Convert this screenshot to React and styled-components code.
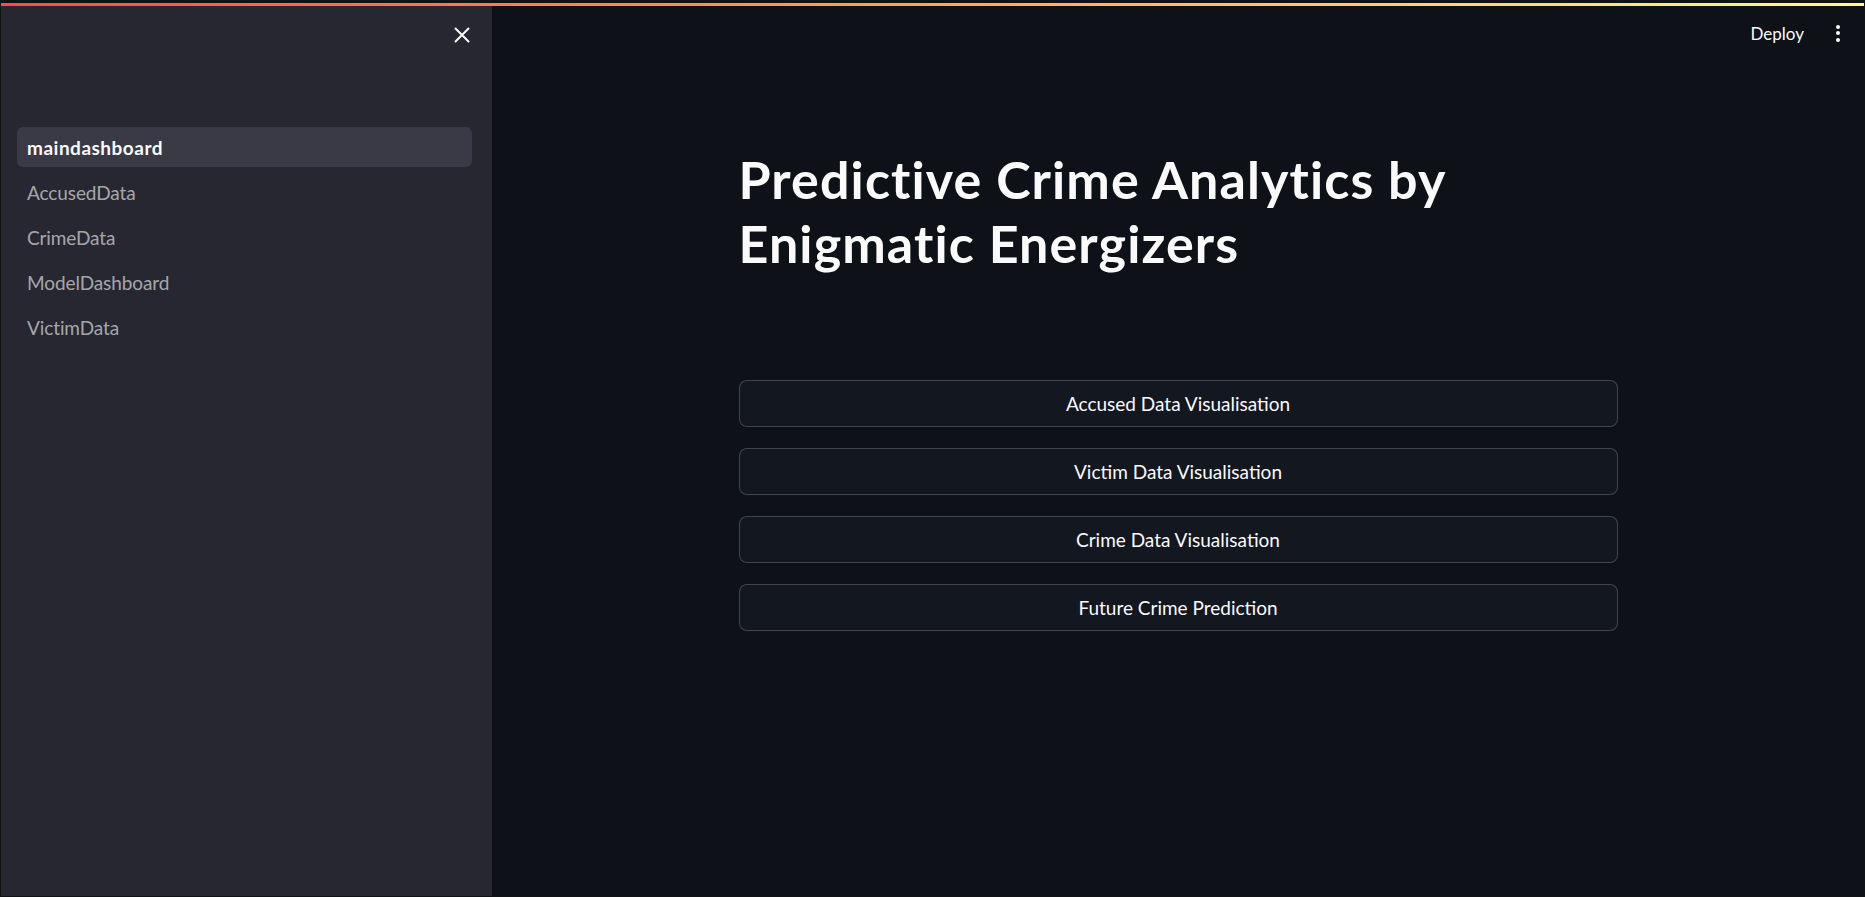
import React from 'react';
import styled, {createGlobalStyle} from 'styled-components';

const GlobalStyle = createGlobalStyle`
  html, body {
    margin: 0;
    padding: 0;
    background: #000;
  }
  body {
    font-family: 'Lato', 'Noto Sans', sans-serif;
    color: #fafafa;
  }
`;

const pages = ['maindashboard', 'AccusedData', 'CrimeData', 'ModelDashboard', 'VictimData'];
const actions = [
  'Accused Data Visualisation',
  'Victim Data Visualisation',
  'Crime Data Visualisation',
  'Future Crime Prediction',
];

const Frame = styled.div`
  width: 1865px;
  height: 897px;
  box-sizing: border-box;
  padding: 3px 1px 1px 1px;
  background: #111214;
  display: flex;
  flex-direction: column;
  overflow: hidden;
`;

const Decoration = styled.div`
  height: 3px;
  flex: none;
  background: linear-gradient(90deg, #ff4b4b, #fffd80);
`;

const Body = styled.div`
  flex: 1;
  display: flex;
  min-height: 0;
`;

const Sidebar = styled.aside`
  width: 491px;
  flex: none;
  background: #262730;
  display: flex;
  flex-direction: column;
  padding: 0 20px 0 16px;
  box-sizing: border-box;
`;

const SidebarHead = styled.div`
  height: 58px;
  display: flex;
  align-items: center;
  justify-content: flex-end;
  padding-right: 1px;
`;

const CloseButton = styled.button`
  background: none;
  border: none;
  padding: 0;
  width: 18px;
  height: 18px;
  display: flex;
  align-items: center;
  justify-content: center;
  cursor: pointer;
`;

const Nav = styled.nav`
  margin-top: 63px;
  display: flex;
  flex-direction: column;
  gap: 5px;
`;

const NavItem = styled.a`
  height: 40px;
  display: flex;
  align-items: center;
  padding: 0 10px;
  border-radius: 6px;
  font-size: 19px;
  text-decoration: none;
  background: ${p => (p.$active ? '#393a46' : 'transparent')};
  color: ${p => (p.$active ? '#fafafa' : 'rgba(250, 250, 250, 0.62)')};
  font-weight: ${p => (p.$active ? 700 : 400)};
  letter-spacing: ${p => (p.$active ? '0.5px' : '-0.1px')};
`;

const Main = styled.main`
  flex: 1;
  background: #0e1117;
  display: flex;
  flex-direction: column;
`;

const Toolbar = styled.header`
  height: 54px;
  display: flex;
  align-items: center;
  justify-content: flex-end;
  gap: 32px;
  padding-right: 24px;
`;

const DeployButton = styled.button`
  background: none;
  border: none;
  color: #fafafa;
  font-family: inherit;
  font-size: 17px;
  padding: 0;
  cursor: pointer;
`;

const MenuDots = styled.div`
  display: flex;
  flex-direction: column;
  gap: 2.5px;
  & > span {
    width: 4px;
    height: 4px;
    border-radius: 50%;
    background: #fafafa;
  }
`;

const Content = styled.section`
  width: 879px;
  margin: 0 auto;
  padding-top: 87px;
`;

const Title = styled.h1`
  margin: 0 0 105px;
  font-size: 52px;
  line-height: 64px;
  font-weight: 700;
  color: #fafafa;
  letter-spacing: 1.1px;
`;

const Actions = styled.div`
  display: flex;
  flex-direction: column;
  gap: 21px;
`;

const ActionButton = styled.button`
  height: 47px;
  width: 100%;
  border-radius: 8px;
  border: 1px solid rgba(250, 250, 250, 0.2);
  background: #131720;
  color: #fafafa;
  font-family: inherit;
  font-size: 19px;
  cursor: pointer;
`;

export default function App() {
  return (
    <Frame>
      <GlobalStyle />
      <Decoration />
      <Body>
        <Sidebar>
          <SidebarHead>
            <CloseButton aria-label="Close sidebar">
              <svg width="16" height="16" viewBox="0 0 16 16">
                <path d="M1.5 1.5 L14.5 14.5 M14.5 1.5 L1.5 14.5" stroke="#fafafa" strokeWidth="2" strokeLinecap="round" />
              </svg>
            </CloseButton>
          </SidebarHead>
          <Nav>
            {pages.map((name, i) => (
              <NavItem key={name} href="#" $active={i === 0}>{name}</NavItem>
            ))}
          </Nav>
        </Sidebar>
        <Main>
          <Toolbar>
            <DeployButton>Deploy</DeployButton>
            <MenuDots><span /><span /><span /></MenuDots>
          </Toolbar>
          <Content>
            <Title>Predictive Crime Analytics by<br />Enigmatic Energizers</Title>
            <Actions>
              {actions.map(label => (
                <ActionButton key={label}>{label}</ActionButton>
              ))}
            </Actions>
          </Content>
        </Main>
      </Body>
    </Frame>
  );
}
